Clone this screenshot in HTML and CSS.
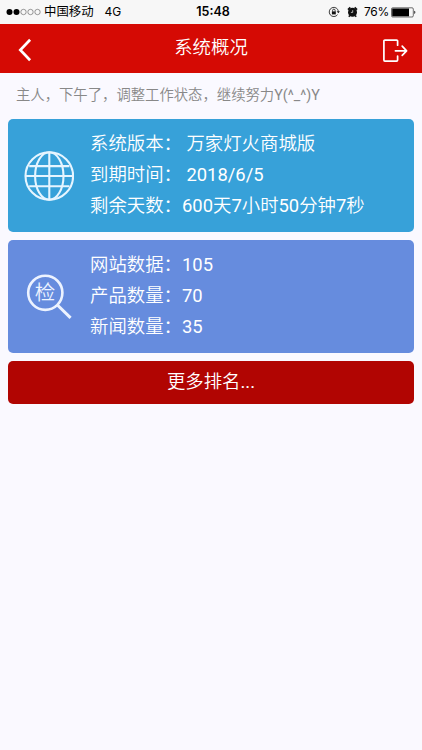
FILE: index.html
```
<!DOCTYPE html>
<html lang="zh-CN">
<head>
    <meta charset="utf-8">
    <meta name="viewport" content="width=device-width, initial-scale=1">
    <title>系统概况</title>
    <link rel="stylesheet" href="styles.css">
</head>
<body>
    <div class="status-bar">
        <div class="status-left">
            <svg class="signal" viewBox="0 0 36 8">
                <circle cx="3.5" cy="4" r="3" fill="#000"></circle>
                <circle cx="10.5" cy="4" r="3" fill="#000"></circle>
                <g fill="none" stroke="#555" stroke-width="0.6">
                    <circle cx="17.5" cy="4" r="2.7"></circle>
                    <circle cx="24.5" cy="4" r="2.7"></circle>
                    <circle cx="31.5" cy="4" r="2.7"></circle>
                </g>
            </svg>
            <span class="carrier">中国移动</span>
            <span class="network">4G</span>
        </div>
        <div class="clock">15:48</div>
        <div class="status-right">
            <svg class="lock-icon" viewBox="0 0 12 12" fill="none" stroke="#111">
                <path d="M9.6 8.6A4.6 4.6 0 1 1 10.4 5.4" stroke-width="0.8"></path>
                <path d="M8.7 5.2h3.2l-1.6 2z" fill="#111" stroke="none"></path>
                <rect x="3.9" y="5.4" width="3.9" height="3" fill="#111" stroke="none"></rect>
                <path d="M4.6 5.6V4.4a1.25 1.25 0 0 1 2.5 0v1.2" stroke-width="0.8"></path>
            </svg>
            <svg class="alarm-icon" viewBox="0 0 11 12">
                <circle cx="5.5" cy="6.2" r="4.5" fill="#111"></circle>
                <path d="M0.9 3.6L3.3 1.4M10.1 3.6L7.7 1.4M2.8 9.5L1.8 10.7M8.2 9.5l1 1.2" stroke="#111" stroke-width="1.5"></path>
                <path d="M5.7 4.2v2.2H3.9" fill="none" stroke="#f7f7f7" stroke-width="0.7"></path>
            </svg>
            <span class="percent">76%</span>
            <svg class="battery" viewBox="0 0 25 11">
                <rect x="0.5" y="0.8" width="21.8" height="9.2" rx="1.2" fill="none" stroke="#333" stroke-width="0.7"></rect>
                <rect x="1.2" y="1.5" width="16.8" height="7.8" fill="#000"></rect>
                <path d="M23.2 3.8c1.6.4 1.6 2.8 0 3.2z" fill="#333"></path>
            </svg>
        </div>
    </div>

    <header class="header">
        <a class="back" href="#">
            <svg viewBox="0 0 14 24" fill="none" stroke="#fff" stroke-width="2.7">
                <path d="M12.1 1.8L2.3 12l9.8 10.2"></path>
            </svg>
        </a>
        <h1>系统概况</h1>
        <a class="logout" href="#">
            <svg viewBox="0 0 26 25" fill="none" stroke="#fff" stroke-width="1.7" stroke-linecap="round" stroke-linejoin="round">
                <path d="M15.6 7.2V3.1a1 1 0 0 0-1-1H2.9a1 1 0 0 0-1 1v19a1 1 0 0 0 1 1h11.7a1 1 0 0 0 1-1V18"></path>
                <path d="M13.4 12.8h11M20.2 8.2l4.4 4.6-4.4 4.6"></path>
            </svg>
        </a>
    </header>

    <p class="greeting">主人，下午了，调整工作状态，继续努力<span class="latin">Y(^_^)Y</span></p>

    <main class="content">
        <section class="card card-system">
            <svg class="card-icon" viewBox="0 0 50 50" fill="none" stroke="#e6f5ff" stroke-width="2.1">
                <circle cx="25.3" cy="25" r="23.8"></circle>
                <ellipse cx="25.3" cy="25" rx="14.2" ry="23.8"></ellipse>
                <path d="M25.3 1.2v47.6M1.5 25h47.6M5.2 15.1h40.2M5.2 35.3h40.2"></path>
            </svg>
            <ul>
                <li>系统版本： 万家灯火商城版</li>
                <li>到期时间： <span class="latin">2018/6/5</span></li>
                <li>剩余天数：<span class="latin">600</span>天<span class="latin">7</span>小时<span class="latin">50</span>分钟<span class="latin">7</span>秒</li>
            </ul>
        </section>

        <section class="card card-data">
            <svg class="card-icon" viewBox="0 0 50 50" fill="none" stroke="#edf3ff">
                <circle cx="21.3" cy="20.8" r="17.1" stroke-width="2.6"></circle>
                <path d="M33.4 33L46.6 45.8" stroke-width="3"></path>
                <text class="icon-text" x="21" y="28">检</text>
            </svg>
            <ul>
                <li>网站数据：<span class="latin">105</span></li>
                <li>产品数量：<span class="latin">70</span></li>
                <li>新闻数量：<span class="latin">35</span></li>
            </ul>
        </section>

        <a class="more" href="#">更多排名<span class="latin">...</span></a>
    </main>
</body>
</html>
```
FILE: styles.css
```
* { box-sizing: border-box; }
body { margin: 0; min-height: 100vh; background: #faf9ff; font-family: Roboto, "Noto Sans CJK SC", sans-serif; font-weight: 350; }
a { color: inherit; text-decoration: none; }
svg { display: block; flex: none; }
.latin { font-weight: 400; }

.status-bar { display: grid; grid-template-columns: 1fr auto 1fr; align-items: center; height: 24px; padding: 0 6px; background: #f7f7f7; color: #000; font-size: 12.4px; line-height: 22px; font-weight: 400; }
.status-left, .status-right { display: flex; align-items: center; height: 22px; }
.status-right { justify-content: flex-end; }
.signal { width: 36px; height: 8px; margin-right: 2px; }
.network { margin-left: 11px; }
.clock { padding-left: 4px; font-family: Inter, sans-serif; font-size: 12.5px; font-weight: 600; height: 22px; }
.network, .percent { font-family: Inter, sans-serif; font-size: 12px; }
.lock-icon { width: 12px; height: 12px; margin-right: 7px; }
.alarm-icon { width: 11px; height: 12px; margin-right: 6px; }
.percent { margin-right: 2px; letter-spacing: -0.3px; }
.battery { width: 25px; height: 11px; }

.header { display: flex; align-items: center; justify-content: space-between; height: 49px; padding: 3px 14px 0 18px; background: #d50a04; color: #fff; }
.header h1 { margin: 0; padding: 0 4px 5px 0; font-size: 18.4px; line-height: 27px; font-weight: 350; }
.back, .logout { display: flex; width: 26px; }
.back svg { width: 14px; height: 24px; }
.logout svg { width: 26px; height: 25px; }

.greeting { margin: 0; padding: 0 16px; height: 46px; line-height: 45px; font-size: 14.35px; color: #888; white-space: nowrap; }

.content { display: flex; flex-direction: column; gap: 8px; padding: 0 8px; }
.card { display: flex; align-items: center; height: 113px; padding: 0 16px; border-radius: 5px; color: #fff; }
.card-system { background: #37a1d9; }
.card-data { background: #668cde; }
.card-icon { width: 50px; height: 50px; margin-right: 16px; }
.card ul { margin: 0; padding: 0; list-style: none; font-size: 18.4px; line-height: 30.8px; white-space: nowrap; }
.icon-text { font-size: 20.5px; text-anchor: middle; fill: #edf3ff; stroke: none; }
.more { height: 43px; border-radius: 5px; background: #b10502; color: #fff; font-size: 18.4px; line-height: 41px; text-align: center; }
```
